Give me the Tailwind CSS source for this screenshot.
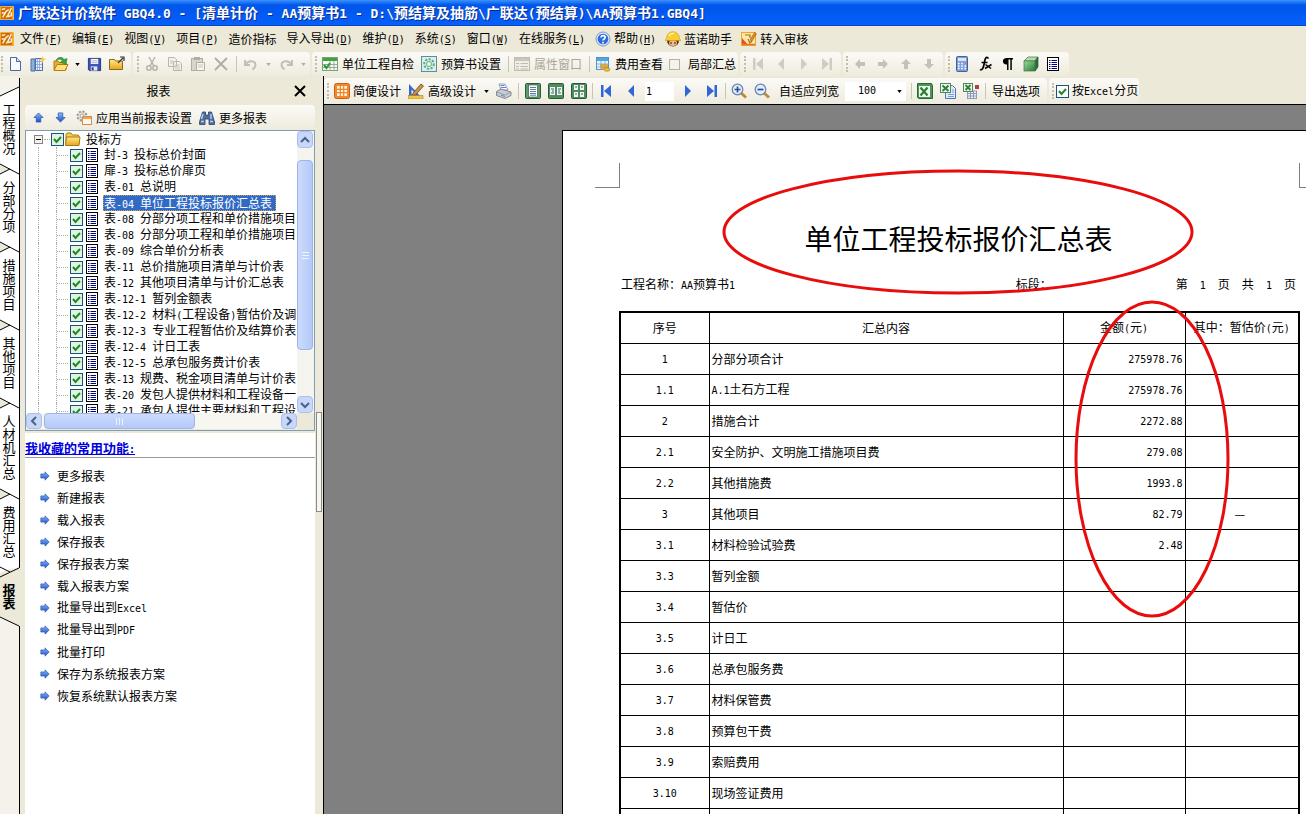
<!DOCTYPE html>
<html lang="zh-CN">
<head>
<meta charset="utf-8">
<title>广联达计价软件 GBQ4.0</title>
<script src="https://cdn.jsdelivr.net/npm/@tailwindcss/browser@4"></script>
</head>
<body class="h-screen flex flex-col overflow-hidden bg-[#ece9d8] text-black text-[12px] leading-[16px] font-['Noto_Sans_CJK_SC',sans-serif] whitespace-nowrap">

<svg class="absolute size-0" aria-hidden="true">
  <defs>
    <linearGradient id="blue" x1="0" y1="0" x2="0" y2="1"><stop offset="0" stop-color="#8db8f8"/><stop offset="1" stop-color="#1c4fc4"/></linearGradient>
    <linearGradient id="green" x1="0" y1="0" x2="1" y2="1"><stop offset="0" stop-color="#9fdc9f"/><stop offset="1" stop-color="#267a35"/></linearGradient>
    <linearGradient id="gold" x1="0" y1="0" x2="0" y2="1"><stop offset="0" stop-color="#ffe98a"/><stop offset="1" stop-color="#e8a41c"/></linearGradient>
  </defs>
  <symbol id="app" viewBox="0 0 16 16"><rect width="16" height="16" rx="1" fill="#f7b530"/><rect x="1" y="1" width="13" height="14" fill="#cf6a10"/><path d="M2 4l4-1M2 8h4L3 13M7 13c2-1 4-6 6-11M6 7l4-3M9 12l4-1V7" stroke="#fff3c8" stroke-width="1.700" fill="none"/></symbol>
  <symbol id="help" viewBox="0 0 16 16"><circle cx="8" cy="8" r="7" fill="#d7e5fa" stroke="#7e9bd0"/><circle cx="8" cy="8" r="5.3" fill="#2c6cd8"/><path d="M6 6.500c0-2.600 4.200-2.400 4.200 0C10.200 8 8 8 8 9.600M8 10.800v1.600" stroke="#fff" stroke-width="1.600" fill="none"/></symbol>
  <symbol id="boy" viewBox="0 0 16 16"><circle cx="8" cy="9.500" r="6" fill="#5a2d18"/><ellipse cx="8" cy="12" rx="4" ry="3" fill="#f0b890"/><path d="M1.500 7.500C1.500-1.500 14.500-1.500 14.500 7.500L16 9.500H0z" fill="#f7ce30" stroke="#d29a10" stroke-width=".6"/><path d="M4 5c1-2 3-3 5-2.500" stroke="#fff7b0" stroke-width="1.300" fill="none"/><path d="M6 11v2M10 11v2" stroke="#321"/></symbol>
  <symbol id="audit" viewBox="0 0 16 16"><rect x=".5" y="1.500" width="14" height="13" fill="#ffe7a8" stroke="#f0a428"/><path d="M1 14V7l6 7z" fill="#e44d26"/><path d="M1 13.500h13" stroke="#e8742a" stroke-width="1.500"/><path d="M4 4h5v3M7 8l2 4 2-2" stroke="#b06a18" stroke-width="1.200" fill="none"/><path d="M9 9l4.500-7.500 2 1.500L11 10z" fill="#d98a24" stroke="#8a5010" stroke-width=".5"/></symbol>
  <symbol id="new" viewBox="0 0 16 16"><path d="M3.500 1.500h6l4 4v9h-10z" fill="#f8fbff" stroke="#4a6a9a"/><path d="M9.500 1.500v4h4" fill="#cfe0f5" stroke="#4a6a9a"/></symbol>
  <symbol id="newbook" viewBox="0 0 16 16"><path d="M1 3h4v12H1z" fill="#8fb0d8" stroke="#4a6ea6"/><path d="M5.500 2.500h7v12h-7z" fill="#e8f1fc" stroke="#4a6ea6"/><path d="M7.500 3v11M9.500 3v11M6 5.500h6M6 8.500h6M6 11.500h6" stroke="#7fa3d4" stroke-width=".8"/><path d="M12.500 0l1 2.500 2.500 1-2.500 1-1 2.500-1-2.500-2.500-1 2.500-1z" fill="#ffc83c"/></symbol>
  <symbol id="open" viewBox="0 0 16 16"><path d="M1 14V5h4l1 1.500h7V14z" fill="#e9ad2c" stroke="#b87b0c"/><path d="M1 14.500l3-6h11l-3 6z" fill="#ffe07a" stroke="#b87b0c"/><path d="M3 5c1-4 6-5 8-1.500l3-1-1 6-5.500-2.500 2-1C8 2.500 5 3 3 5z" fill="#37a53c" stroke="#1c7a24" stroke-width=".5"/></symbol>
  <symbol id="save" viewBox="0 0 16 16"><path d="M1.500 1.500h13v13h-12l-1-1z" fill="#3a52b4" stroke="#24357e"/><rect x="4" y="2" width="8" height="5.500" fill="#f4f6fc"/><path d="M5 4h6M5 6h6" stroke="#9aa6cc" stroke-width=".8"/><rect x="4" y="10" width="7" height="4.500" fill="#dfe4f4"/><rect x="5" y="11" width="2" height="3" fill="#24357e"/></symbol>
  <symbol id="folder2" viewBox="0 0 16 16"><path d="M.5 13.500v-10h5l1 1.500h7v8.500z" fill="url(#gold)" stroke="#8a6a1a"/><path d="M9 7l5-5M11 1h4v4" stroke="#333" stroke-width="1.200" fill="none"/></symbol>
  <symbol id="cut" viewBox="0 0 16 16"><path d="M5 1l5 9M11 1L6 10" stroke="#b5b3a8" stroke-width="1.500"/><circle cx="5" cy="12" r="2.200" fill="none" stroke="#b5b3a8" stroke-width="1.500"/><circle cx="11" cy="12" r="2.200" fill="none" stroke="#b5b3a8" stroke-width="1.500"/></symbol>
  <symbol id="copy" viewBox="0 0 16 16"><path d="M1.500 1.500h6l2 2v7h-8zM6.500 5.500h6l2 2v7h-8z" fill="#f2f1ea" stroke="#b9b7ab"/><path d="M8 9h5M8 11h5M8 13h5M3 5h3M3 7h3" stroke="#c9c7bc"/></symbol>
  <symbol id="paste" viewBox="0 0 16 16"><rect x="1.500" y="2.500" width="11" height="12" fill="#d8d6ca" stroke="#b0aea2"/><rect x="4" y="1" width="6" height="3" fill="#b0aea2"/><path d="M6.500 6.500h8v8h-8z" fill="#f6f5f0" stroke="#b0aea2"/><path d="M8 9h5M8 11h5" stroke="#c9c7bc"/></symbol>
  <symbol id="del" viewBox="0 0 16 16"><path d="M2 2l12 12M14 2L2 14" stroke="#aeaca2" stroke-width="1.800"/></symbol>
  <symbol id="undo" viewBox="0 0 16 16"><path d="M2 4v5h5M2.500 8.500c3-5 10-4 10 .5 0 2-1 3-3 4.500" fill="none" stroke="#c2c0b6" stroke-width="2"/></symbol>
  <symbol id="redo" viewBox="0 0 16 16"><path d="M14 4v5H9M13.500 8.500c-3-5-10-4-10 .5 0 2 1 3 3 4.500" fill="none" stroke="#c2c0b6" stroke-width="2"/></symbol>
  <symbol id="check1" viewBox="0 0 16 16"><rect x=".5" y="1.500" width="15" height="13" fill="#f6fbf4" stroke="#7aa07a"/><path d="M1 2h14v3H1z" fill="#3ea144"/><path d="M1 8.500h14M1 11.500h14M8 5v10M12 5v10" stroke="#9aa89a"/><path d="M2 9l2.500 3L8 7" stroke="#2f9a34" stroke-width="2" fill="none"/></symbol>
  <symbol id="gear" viewBox="0 0 16 16"><rect x=".5" y=".5" width="15" height="15" fill="#dbeff0" stroke="#5b8fa0"/><circle cx="8" cy="8" r="4.800" fill="none" stroke="#5fae78" stroke-width="2" stroke-dasharray="2.200 1.400"/><circle cx="8" cy="8" r="2.500" fill="#eefaf0" stroke="#5fae78"/></symbol>
  <symbol id="prop" viewBox="0 0 16 16"><rect x=".5" y="1.500" width="15" height="13" fill="#eeede6" stroke="#bebcb0"/><path d="M1 2h14v3H1z" fill="#c9c7bb"/><path d="M2 7.500h3M2 10.500h3M2 13h3M6.500 7.500H14M6.500 10.500H14M6.500 13H14" stroke="#bebcb0"/></symbol>
  <symbol id="fee" viewBox="0 0 16 16"><rect x="1.500" y="1.500" width="12" height="12" fill="#eaf3fd" stroke="#4f94cc"/><path d="M2 2h11v3H2z" fill="#58a5de"/><path d="M2 8h11M2 11h11M6 5v8M10 5v8" stroke="#7fb5e2"/><path d="M5 9h8M5 11h8M6 13h7" stroke="#d69a22" stroke-width="1.600"/><ellipse cx="12" cy="13.500" rx="3" ry="1.800" fill="#efbe3c" stroke="#b57f12" stroke-width=".6"/></symbol>
  <symbol id="first" viewBox="0 0 16 16"><path d="M3 2h2.500v12H3zM13 2v12L6 8z" fill="currentColor"/></symbol>
  <symbol id="prev" viewBox="0 0 16 16"><path d="M11 2v12L5 8z" fill="currentColor"/></symbol>
  <symbol id="next" viewBox="0 0 16 16"><path d="M5 2v12l6-6z" fill="currentColor"/></symbol>
  <symbol id="last" viewBox="0 0 16 16"><path d="M13 2h-2.500v12H13zM3 2v12l7-6z" fill="currentColor"/></symbol>
  <symbol id="right" viewBox="0 0 16 16"><path d="M3 6h5V3l5 5-5 5v-3H3z" fill="currentColor"/></symbol>
  <symbol id="left" viewBox="0 0 16 16"><path d="M13 6H8V3L3 8l5 5v-3h5z" fill="currentColor"/></symbol>
  <symbol id="up" viewBox="0 0 16 16"><path d="M6 13V8H3l5-5 5 5h-3v5z" fill="currentColor"/></symbol>
  <symbol id="down" viewBox="0 0 16 16"><path d="M6 3v5H3l5 5 5-5h-3V3z" fill="currentColor"/></symbol>
  <symbol id="calc" viewBox="0 0 16 16"><rect x="2.500" y=".5" width="11" height="15" rx="1" fill="#7d9fd8" stroke="#43619c"/><rect x="4" y="2" width="8" height="3" fill="#d8e8fb"/><path d="M4 7.500h8M4 10h8M4 12.500h8" stroke="#fff" stroke-width="1.500" stroke-dasharray="1.600 1.600"/><path d="M10.500 7.500h1.500" stroke="#e05050" stroke-width="1.500"/></symbol>
  <symbol id="fx" viewBox="0 0 16 16"><path d="M11.500 2.500C9-.5 8 3 7.500 6S6 15 3 13.500M4.500 6.500h6" stroke="#000" stroke-width="1.700" fill="none"/><path d="M8.500 8.500l5.500 4M14.500 8.500L8 12.500" stroke="#000" stroke-width="1.500"/></symbol>
  <symbol id="para" viewBox="0 0 16 16"><path d="M13 2H7C1 2 2 9 7 8.500V14h1.500V3.500h1.800V14h1.500V3.500H13z" fill="#000"/></symbol>
  <symbol id="cube" viewBox="0 0 16 16"><path d="M1 5l4-4h10l-3 4z" fill="#b3dcae" stroke="#3c7a44" stroke-width=".7"/><path d="M12 5l3-4v10l-3 4z" fill="#2c7040" stroke="#235832" stroke-width=".7"/><rect x="1" y="5" width="11" height="10" fill="url(#green)" stroke="#3c7a44" stroke-width=".7"/></symbol>
  <symbol id="list" viewBox="0 0 12 14"><rect x=".5" y=".5" width="11" height="13" fill="#fff" stroke="#000"/><path d="M2 3.500h1.500M2 5.500h1.500M2 7.500h1.500M2 9.500h1.500M2 11.500h1.500M4.500 3.500H10M4.500 5.500H10M4.500 7.500H10M4.500 9.500H10M4.500 11.500H10" stroke="#000080"/></symbol>
  <symbol id="grid" viewBox="0 0 16 16"><rect x=".5" y=".5" width="15" height="15" rx="2" fill="#f28a2c" stroke="#cf5f12"/><path d="M3 3h10v10H3z" fill="#fff2dc"/><path d="M3 6.300h10M3 9.700h10M6.300 3v10M9.700 3v10" stroke="#ef8428" stroke-width="1.200"/></symbol>
  <symbol id="pen" viewBox="0 0 16 16"><path d="M1 1v13h12z" fill="#3b66c4"/><path d="M3.500 6.500v5h5z" fill="#e6eefb"/><path d="M5 10l8-9 2.500 2-8 9-3 .5z" fill="#c89146" stroke="#5d3b12" stroke-width=".7"/><path d="M0 12.500h15V16H0z" fill="#f0c544" stroke="#a8801a" stroke-width=".6"/></symbol>
  <symbol id="print" viewBox="0 0 16 16"><path d="M5 7L3 1l6 0 3 6z" fill="#fff" stroke="#7088b4" stroke-width=".8"/><path d="M4.500 2.500h4M5 4.500h5" stroke="#5b85cc"/><path d="M.5 8.500L5 6l10 3v3.500l-6 3-8.500-3z" fill="#c8ccd4" stroke="#6b7180" stroke-width=".8"/><path d="M.5 9l8.500 3 6-3" stroke="#8b91a0" stroke-width=".8" fill="none"/><path d="M5 12.500l4 1.500v-1l-4-1.500z" fill="#5b85cc"/></symbol>
  <symbol id="pg1" viewBox="0 0 16 16"><rect x=".5" y=".5" width="15" height="15" rx="1" fill="#5f9a6a" stroke="#2a5a36"/><rect x="3.500" y="2" width="9" height="12" fill="#fff" stroke="#294a30" stroke-width=".6"/><path d="M5 4.500h6M5 6.500h6M5 8.500h6M5 10.500h6M5 12.200h6" stroke="#5b7d9c"/></symbol>
  <symbol id="pg2" viewBox="0 0 16 16"><rect x=".5" y=".5" width="15" height="15" rx="1" fill="#4f8c5b" stroke="#2a5a36"/><path d="M2 4h5v8H2zM9 4h5v8H9z" fill="#eef6ee"/><path d="M3 6h3M4 8h2M3 10h3M10 6h3M10 8h2M10 10h3" stroke="#37608a"/></symbol>
  <symbol id="pg4" viewBox="0 0 16 16"><rect x=".5" y=".5" width="15" height="15" rx="1" fill="#4f8c5b" stroke="#2a5a36"/><path d="M3 2h4v5H3zM9 2h4v5H9zM3 9h4v5H3zM9 9h4v5H9z" fill="#eef6ee"/><path d="M4 4h2M10 4h2M4 11h2M10 11h2" stroke="#37608a"/></symbol>
  <symbol id="zin" viewBox="0 0 16 16"><path d="M10 10l5 4.500" stroke="#c48a2c" stroke-width="3"/><circle cx="6.500" cy="6.500" r="5.300" fill="#e4effb" stroke="#6a86b4" stroke-width="1.300"/><path d="M3.500 6.500h6M6.500 3.500v6" stroke="#2e4f96" stroke-width="1.700"/></symbol>
  <symbol id="zout" viewBox="0 0 16 16"><path d="M10 10l5 4.500" stroke="#c48a2c" stroke-width="3"/><circle cx="6.500" cy="6.500" r="5.300" fill="#e4effb" stroke="#6a86b4" stroke-width="1.300"/><path d="M3.500 6.500h6" stroke="#2e4f96" stroke-width="1.700"/></symbol>
  <symbol id="xls" viewBox="0 0 16 16"><path d="M.5 .5h14l1 2v13H2l-1.500-1z" fill="#4d9455" stroke="#2a6a34"/><rect x="2" y="3" width="11" height="11" fill="#f3faf2"/><path d="M3.500 4.500l7 8M10.500 4.500l-7 8" stroke="#2d7f38" stroke-width="2.300"/></symbol>
  <symbol id="xls2" viewBox="0 0 16 16"><path d="M5.500 2.500h7l3 3v10h-10z" fill="#dfeafa" stroke="#4f74b4"/><path d="M8 13.500h6M12 7h2M12 9h2M8 11.500h6" stroke="#7c9dd2"/><rect x=".5" y=".5" width="10" height="9" fill="#eef8ee" stroke="#4d8a54"/><path d="M2.500 2.500l6 5.500M8.500 2.500l-6 5.500" stroke="#2d7f38" stroke-width="2"/></symbol>
  <symbol id="xls3" viewBox="0 0 16 16"><path d="M4 10.500h10M4 13h10M4.500 8v7.500M7.500 8v7.500M10.500 8v7.500M13.500 8v7.500M4 15.500h10M4 8h10" stroke="#8a9cc4"/><rect x=".5" y=".5" width="9" height="8" fill="#eef8ee" stroke="#4d8a54"/><path d="M2.500 2l5 5M7.500 2l-5 5" stroke="#2d7f38" stroke-width="1.800"/><rect x="12" y="2" width="4" height="4" fill="#b83a4c"/></symbol>
  <symbol id="apply" viewBox="0 0 16 16"><circle cx="6" cy="6" r="4.500" fill="#e3e1da" stroke="#9a988e" stroke-width="2" stroke-dasharray="2 1.500"/><circle cx="6" cy="6" r="1.800" fill="#fff" stroke="#9a988e" stroke-width=".8"/><rect x="6.500" y="6.500" width="9" height="8" fill="#fff8ee" stroke="#d98b4a"/><path d="M7 7h8v2H7z" fill="#f2a45c"/></symbol>
  <symbol id="bino" viewBox="0 0 16 16"><path d="M3.500 2h3v3h3V2h3l3 10v2.500H10V9H6v5.500H.5V12z" fill="#4e6f9e" stroke="#2b4470" stroke-width=".8"/><path d="M2 11.500h3M11 11.500h3M4 4l-1.500 5M12 4v5" stroke="#b9d0ee" stroke-width="1.400"/></symbol>
  <symbol id="folder" viewBox="0 0 16 14"><path d="M1 12V2.500l1-1.500h4l1.500 2H13l1 1V12z" fill="#f4cf52" stroke="#a87c10"/><path d="M.5 13.500l1-8.500h13.500l-1 8.500z" fill="url(#gold)" stroke="#a87c10"/></symbol>
  <symbol id="arrow" viewBox="0 0 12 12"><path d="M1 3.500h5V1l5 5-5 5V8.500H1z" fill="url(#blue)" stroke="#2a55b0" stroke-width=".8"/></symbol>
  <symbol id="arrowup" viewBox="0 0 12 12"><path d="M3.500 11V6H1l5-5 5 5H8.500v5z" fill="url(#blue)" stroke="#2a55b0" stroke-width=".8"/></symbol>
  <symbol id="arrowdn" viewBox="0 0 12 12"><path d="M3.500 1v5H1l5 5 5-5H8.500V1z" fill="url(#blue)" stroke="#2a55b0" stroke-width=".8"/></symbol>
  <symbol id="drop" viewBox="0 0 6 4"><path d="M0 0h6L3 4z" fill="currentColor"/></symbol>
  <symbol id="chev" viewBox="0 0 10 10"><path d="M1 7l4-4 4 4" stroke="#4d6185" stroke-width="2" fill="none"/></symbol>
</svg>

<header class="flex h-[26px] shrink-0 items-center gap-1 bg-linear-to-b from-[#3a93ff] via-[#0055ea] via-20% to-[#0560fb] border-b border-[#0a45c4] text-white font-bold text-[14px]">
  <svg class="size-[14px]"><use href="#app"/></svg>
  <h1 class="[text-shadow:1px_1px_#0a2a8c]">广联达计价软件 GBQ4.0 - [清单计价 - AA预算书1 - D:\预结算及抽筋\广联达(预结算)\AA预算书1.GBQ4]</h1>
</header>

<nav class="flex h-[26px] shrink-0 items-center gap-[10px]" aria-label="菜单">
  <div class="flex items-center gap-[6px]"><svg class="size-[14px]"><use href="#app"/></svg><button><span>文件(<u>F</u>)</span></button></div>
  <button><span>编辑(<u>E</u>)</span></button>
  <button><span>视图(<u>V</u>)</span></button>
  <button><span>项目(<u>P</u>)</span></button>
  <button>造价指标</button>
  <button><span>导入导出(<u>D</u>)</span></button>
  <button><span>维护(<u>D</u>)</span></button>
  <button><span>系统(<u>S</u>)</span></button>
  <button><span>窗口(<u>W</u>)</span></button>
  <button><span>在线服务(<u>L</u>)</span></button>
  <div class="flex gap-[9px]">
    <button class="flex items-center gap-[3px]"><svg class="size-4"><use href="#help"/></svg><span>帮助(<u>H</u>)</span></button>
    <button class="flex items-center gap-[3px]"><svg class="size-4"><use href="#boy"/></svg>蓝诺助手</button>
    <button class="flex items-center gap-[3px]"><svg class="size-4"><use href="#audit"/></svg>转入审核</button>
  </div>
</nav>

<div class="flex h-6 shrink-0 gap-[2px]" role="toolbar">
  <div class="flex w-[131px] items-center gap-[7px] rounded-r bg-linear-to-b from-[#fbfaf6] to-[#eeebde]">
    <i class="ml-px -mr-[3px] h-4 w-0 border-l-2 border-dotted border-[#c1beae]"></i>
    <button aria-label="新建"><svg class="size-4"><use href="#new"/></svg></button>
    <button aria-label="新建项目"><svg class="size-4"><use href="#newbook"/></svg></button>
    <button aria-label="打开" class="flex items-center gap-[6px]"><svg class="size-4"><use href="#open"/></svg><svg class="h-[3px] w-[5px]"><use href="#drop"/></svg></button>
    <button aria-label="保存"><svg class="size-[15px]"><use href="#save"/></svg></button>
    <button aria-label="关闭"><svg class="size-4"><use href="#folder2"/></svg></button>
  </div>
  <div class="flex w-[177px] items-center gap-[7px] rounded bg-linear-to-b from-[#fbfaf6] to-[#eeebde] text-[#b0aea2]">
    <i class="ml-1 mr-[-2px] h-4 w-0 border-l-2 border-dotted border-[#c1beae]"></i>
    <button aria-label="剪切"><svg class="size-4"><use href="#cut"/></svg></button>
    <button aria-label="复制"><svg class="size-4"><use href="#copy"/></svg></button>
    <button aria-label="粘贴"><svg class="size-4"><use href="#paste"/></svg></button>
    <button aria-label="删除"><svg class="size-4"><use href="#del"/></svg></button>
    <i class="h-4 w-px bg-[#c9c6b6]"></i>
    <button aria-label="撤销" class="-ml-px flex items-center gap-[7px]"><svg class="size-4"><use href="#undo"/></svg><svg class="h-[3px] w-[5px]"><use href="#drop"/></svg></button>
    <button aria-label="重做" class="flex items-center gap-[7px]"><svg class="size-4"><use href="#redo"/></svg><svg class="h-[3px] w-[5px]"><use href="#drop"/></svg></button>
  </div>
  <div class="flex w-[426px] items-center gap-[7px] rounded bg-linear-to-b from-[#fbfaf6] to-[#eeebde]">
    <i class="ml-[3px] -mr-[2px] h-4 w-0 border-l-2 border-dotted border-[#c1beae]"></i>
    <button class="flex items-center gap-[4px]"><svg class="size-4"><use href="#check1"/></svg>单位工程自检</button>
    <button class="flex items-center gap-[4px]"><svg class="size-4"><use href="#gear"/></svg>预算书设置</button>
    <i class="h-4 w-px bg-[#c9c6b6]"></i>
    <button disabled class="-ml-[2px] flex items-center gap-[4px] text-[#aca899]"><svg class="size-4"><use href="#prop"/></svg>属性窗口</button>
    <i class="h-4 w-px bg-[#c9c6b6]"></i>
    <button class="-ml-[2px] flex items-center gap-[4px]"><svg class="size-4"><use href="#fee"/></svg>费用查看</button>
    <label class="-ml-px flex items-center gap-[8px]"><input type="checkbox" class="size-[11px] appearance-none border border-[#b5b2a5] bg-[#f4f2ea]">局部汇总</label>
  </div>
  <div class="flex w-[101px] items-center gap-[7px] rounded bg-linear-to-b from-[#fbfaf6] to-[#eeebde] text-[#cfcdc2]">
    <i class="ml-1 -mr-[3px] h-4 w-0 border-l-2 border-dotted border-[#c1beae]"></i>
    <button aria-label="首条"><svg class="size-4"><use href="#first"/></svg></button>
    <button aria-label="上一条"><svg class="size-4"><use href="#prev"/></svg></button>
    <button aria-label="下一条"><svg class="size-4"><use href="#next"/></svg></button>
    <button aria-label="末条"><svg class="size-4"><use href="#last"/></svg></button>
  </div>
  <div class="flex w-[100px] items-center gap-[7px] rounded bg-linear-to-b from-[#fbfaf6] to-[#eeebde] text-[#c4c2b8]">
    <i class="ml-[3px] -mr-[3px] h-4 w-0 border-l-2 border-dotted border-[#c1beae]"></i>
    <button aria-label="左移"><svg class="size-4"><use href="#left"/></svg></button>
    <button aria-label="右移"><svg class="size-4"><use href="#right"/></svg></button>
    <button aria-label="上移"><svg class="size-4"><use href="#up"/></svg></button>
    <button aria-label="下移"><svg class="size-4"><use href="#down"/></svg></button>
  </div>
  <div class="flex w-[124px] items-center gap-[7px] rounded bg-linear-to-b from-[#fbfaf6] to-[#eeebde]">
    <i class="ml-[3px] -mr-[3px] h-4 w-0 border-l-2 border-dotted border-[#c1beae]"></i>
    <button aria-label="计算器"><svg class="size-4"><use href="#calc"/></svg></button>
    <button aria-label="函数"><svg class="size-4"><use href="#fx"/></svg></button>
    <button aria-label="段落"><svg class="size-4"><use href="#para"/></svg></button>
    <button aria-label="模型"><svg class="size-4"><use href="#cube"/></svg></button>
    <button aria-label="列表" class="ml-px"><svg class="h-[14px] w-3"><use href="#list"/></svg></button>
  </div>
</div>

<div class="flex min-h-0 flex-1">
  <nav class="relative flex w-5 shrink-0 flex-col pt-4 leading-[13px] text-[13px]" aria-label="页签">
    <svg class="absolute inset-0 h-full w-5" aria-hidden="true">
      <rect width="19" height="100%" fill="#f4f2ea"/>
      <path d="M0 20L19 11V493L0 497z" fill="#fff"/>
      <path d="M0 497L10 493 19 492V550L0 541z" fill="#ece9d8"/>
      <path d="M0 88L10 93 0 98zM0 166L10 171 0 176zM0 244L10 249 0 254zM0 322L10 327 0 332zM0 413L10 418 0 423z" fill="#ece9d8"/>
      <path d="M0 20L19 11M0 88l19 10M0 98l10-5M0 166l19 10M0 176l10-5M0 244l19 10M0 254l10-5M0 322l19 10M0 332l10-5M0 413l19 10M0 423l10-5M0 491l10 5M0 501l19-9M0 541l19 9" fill="none" stroke="#000"/>
      <path d="M19.500 2V492M19.500 550V2000" stroke="#000"/>
    </svg>
    <button class="relative flex h-[78px] w-[18px] justify-center pt-[10px] whitespace-normal"><span class="w-[13px]">工程概况</span></button>
    <button class="relative flex h-[78px] w-[18px] justify-center pt-[10px] whitespace-normal"><span class="w-[13px]">分部分项</span></button>
    <button class="relative flex h-[78px] w-[18px] justify-center pt-[10px] whitespace-normal"><span class="w-[13px]">措施项目</span></button>
    <button class="relative flex h-[78px] w-[18px] justify-center pt-[10px] whitespace-normal"><span class="w-[13px]">其他项目</span></button>
    <button class="relative flex h-[91px] w-[18px] justify-center pt-[10px] whitespace-normal"><span class="w-[13px]">人材机汇总</span></button>
    <button class="relative flex h-[78px] w-[18px] justify-center pt-[10px] whitespace-normal"><span class="w-[13px]">费用汇总</span></button>
    <button class="relative flex h-[53px] w-[18px] justify-center pt-[10px] font-bold whitespace-normal"><span class="w-[13px]">报表</span></button>
  </nav>

  <aside class="flex w-[304px] shrink-0 pl-[5px]">
    <div class="flex w-[290px] flex-col">
      <div class="flex h-[29px] shrink-0 items-center pr-[9px]">
        <h2 class="flex-1 pr-[2px] text-center">报表</h2>
        <button aria-label="关闭面板"><svg class="size-[12px]" viewBox="0 0 12 12"><path d="M1 1l10 10M11 1L1 11" stroke="#000" stroke-width="2"/></svg></button>
      </div>
      <div class="flex h-[25px] shrink-0 items-center rounded bg-linear-to-b from-[#fbfaf6] to-[#eeebde] pl-2" role="toolbar">
        <button aria-label="上移报表" class="mr-[11px]"><svg class="size-[11px]"><use href="#arrowup"/></svg></button>
        <button aria-label="下移报表" class="mr-[10px]"><svg class="size-[11px]"><use href="#arrowdn"/></svg></button>
        <button class="mr-[7px] flex items-center gap-1"><svg class="size-4"><use href="#apply"/></svg>应用当前报表设置</button>
        <button class="flex items-center gap-1"><svg class="size-4"><use href="#bino"/></svg>更多报表</button>
      </div>
      <div class="flex h-[301px] shrink-0 flex-col border border-[#7f9db9] bg-white">
        <div class="flex min-h-0 flex-1">
          <ul id="tree" class="relative min-w-0 flex-1 overflow-hidden">
            <li class="flex h-4 items-center">
              <span class="ml-2 flex size-[9px] items-center justify-center border border-[#848484] bg-[#f4f2ea]"><i class="h-px w-[5px] bg-black"></i></span>
              <i class="ml-px mr-px h-0 w-[6px] border-t border-dotted border-[#aaa]"></i>
              <label class="flex items-center"><input type="checkbox" checked class="size-[13px] appearance-none border border-[#1c5180] bg-[#e2f3e0] bg-[url('data:image/svg+xml,%3Csvg%20xmlns=%22http://www.w3.org/2000/svg%22%20viewBox=%220%200%2011%2011%22%3E%3Cpath%20d=%22M2%205l2.500%203L9%203%22%20fill=%22none%22%20stroke=%22%231f8a2a%22%20stroke-width=%222%22/%3E%3C/svg%3E')]"><svg class="ml-[1px] mr-[5px] h-[14px] w-4"><use href="#folder"/></svg>投标方</label>
            </li>
          </ul>
          <div class="flex w-[17px] shrink-0 flex-col bg-[#f5f4ee] pr-px">
            <button aria-label="向上滚动" class="flex h-[17px] items-center justify-center rounded-sm border border-[#aebfe6] bg-[#c8d7fc]"><svg class="size-[10px]"><use href="#chev"/></svg></button>
            <div class="mt-3 flex h-[190px] items-center justify-center rounded-sm border border-[#9eb4e4] bg-linear-to-r from-[#cddbfd] to-[#b4c9f9]"><i class="flex h-[7px] w-[7px] items-center border-y border-[#eef4fe]"><i class="h-px w-full bg-[#eef4fe]"></i></i></div>
            <button aria-label="向下滚动" class="mt-auto flex h-[17px] items-center justify-center rounded-sm border border-[#aebfe6] bg-[#c8d7fc]"><svg class="size-[10px] rotate-180"><use href="#chev"/></svg></button>
          </div>
        </div>
        <div class="flex h-[17px] shrink-0 bg-[#ece9d8] pb-px">
          <div class="flex flex-1 bg-[#f7f6f1]">
            <button aria-label="向左滚动" class="flex w-4 items-center justify-center rounded-sm border border-[#aebfe6] bg-[#c8d7fc]"><svg class="size-[10px] -rotate-90"><use href="#chev"/></svg></button>
            <div class="ml-[2px] flex w-[151px] items-center justify-center rounded-sm border border-[#9eb4e4] bg-linear-to-b from-[#cddbfd] to-[#b4c9f9]"><i class="flex h-[7px] w-[7px] justify-center border-x border-[#eef4fe]"><i class="h-full w-px bg-[#eef4fe]"></i></i></div>
            <button aria-label="向右滚动" class="ml-auto flex w-4 items-center justify-center rounded-sm border border-[#aebfe6] bg-[#c8d7fc]"><svg class="size-[10px] rotate-90"><use href="#chev"/></svg></button>
          </div>
          <div class="w-[17px]"></div>
        </div>
      </div>
      <section class="mt-[2px] min-h-0 flex-1 bg-white pt-2">
        <h3 class="border-b border-[#9a9a9a] text-[13px] leading-[14px] font-bold text-[#0000e0] underline">我收藏的常用功能:</h3>
        <ul id="favs" class="pt-[7px] pl-[15px]"></ul>
      </section>
    </div>
    <div class="flex flex-1 justify-start border-r border-black pt-[336px] pl-px">
      <i class="flex h-[100px] w-[6px] border border-[#8d8b80] bg-[#f6f5f0]"></i>
    </div>
  </aside>

  <main class="flex min-w-0 flex-1 flex-col">
    <div class="flex h-[29px] shrink-0 items-stretch border-b border-black pt-[2px]" role="toolbar">
      <div class="flex w-[723px] items-center rounded bg-linear-to-b from-[#fbfaf6] to-[#eeebde]">
        <i class="ml-[3px] mr-[5px] h-4 w-0 border-l-2 border-dotted border-[#c1beae]"></i>
        <button class="mr-[7px] flex items-center gap-[3px]"><svg class="size-4"><use href="#grid"/></svg>简便设计</button>
        <button class="mr-[7px] flex items-center gap-1"><svg class="size-4"><use href="#pen"/></svg>高级设计<svg class="ml-1 h-[3px] w-[5px]"><use href="#drop"/></svg></button>
        <button aria-label="打印"><svg class="size-4"><use href="#print"/></svg></button>
        <i class="mx-[6px] h-4 w-px bg-[#c9c6b6]"></i>
        <div class="flex gap-[7px]">
          <button aria-label="单页"><svg class="size-4"><use href="#pg1"/></svg></button>
          <button aria-label="双页"><svg class="size-4"><use href="#pg2"/></svg></button>
          <button aria-label="四页"><svg class="size-4"><use href="#pg4"/></svg></button>
        </div>
        <i class="mx-[5px] h-4 w-px bg-[#c9c6b6]"></i>
        <div class="flex items-center gap-[6px] text-[#2f66d8]">
          <button aria-label="首页" class="mr-[3px]"><svg class="size-4"><use href="#first"/></svg></button>
          <button aria-label="上一页"><svg class="size-4"><use href="#prev"/></svg></button>
          <input aria-label="页码" value="1" class="h-[19px] w-[29px] bg-white px-px text-[10px] text-black font-['DejaVu_Sans_Mono',monospace]">
          <button aria-label="下一页" class="mr-[2px]"><svg class="size-4"><use href="#next"/></svg></button>
          <button aria-label="末页"><svg class="size-4"><use href="#last"/></svg></button>
        </div>
        <i class="mx-[5px] h-4 w-px bg-[#c9c6b6]"></i>
        <button aria-label="放大" class="mr-[7px]"><svg class="size-4"><use href="#zin"/></svg></button>
        <button aria-label="缩小" class="mr-[9px]"><svg class="size-4"><use href="#zout"/></svg></button>
        <button class="mr-[6px]">自适应列宽</button>
        <div class="relative flex">
          <select aria-label="缩放比例" class="h-[19px] w-[61px] appearance-none bg-white pl-[13px] text-[10px] font-['DejaVu_Sans_Mono',monospace]"><option>100</option></select>
          <svg class="pointer-events-none absolute top-2 right-1 h-[3px] w-[5px]"><use href="#drop"/></svg>
        </div>
        <i class="mx-[5px] h-4 w-px bg-[#c9c6b6]"></i>
        <div class="flex gap-[7px]">
          <button aria-label="导出到Excel"><svg class="size-4"><use href="#xls"/></svg></button>
          <button aria-label="批量导出"><svg class="size-4"><use href="#xls2"/></svg></button>
          <button aria-label="导出单元格"><svg class="size-4"><use href="#xls3"/></svg></button>
        </div>
        <i class="mx-[6px] h-4 w-px bg-[#c9c6b6]"></i>
        <button>导出选项</button>
      </div>
      <div class="ml-[2px] flex w-[90px] items-center rounded bg-linear-to-b from-[#fbfaf6] to-[#eeebde]">
        <i class="ml-[3px] mr-[2px] h-4 w-0 border-l-2 border-dotted border-[#c1beae]"></i>
        <label class="flex items-center gap-[3px]"><input type="checkbox" checked class="size-[13px] appearance-none border border-[#1c5180] bg-white bg-[url('data:image/svg+xml,%3Csvg%20xmlns=%22http://www.w3.org/2000/svg%22%20viewBox=%220%200%2011%2011%22%3E%3Cpath%20d=%22M2%205l2.500%203L9%203%22%20fill=%22none%22%20stroke=%22%231f8a2a%22%20stroke-width=%222%22/%3E%3C/svg%3E')]"><span>按Excel分页</span></label>
      </div>
    </div>

    <div class="min-h-0 flex-1 overflow-hidden bg-[#808080] pt-[25px] pl-[238px]">
      <article class="relative min-h-full border-t border-l border-black bg-white pt-8 pr-[6px] pl-[56px]">
        <div class="flex justify-between">
          <i class="-ml-6 size-[25px] border-r border-b border-[#808080]"></i>
          <i class="-mr-6 size-[25px] border-b border-l border-[#808080]"></i>
        </div>
        <h2 class="mt-[33px] pr-[2px] text-center text-[28px] leading-[34px]">单位工程投标报价汇总表</h2>
        <div class="mt-[21px] flex pr-1 pl-[2px]">
          <span>工程名称：AA预算书1</span>
          <span class="mr-[124px] ml-auto">标段：</span>
          <span>第&nbsp; 1&nbsp; 页&nbsp; 共&nbsp; 1&nbsp; 页</span>
        </div>
        <table class="mt-[17px] w-full table-fixed border-collapse border-2 border-black">
          <colgroup><col class="w-[89px]"><col><col class="w-[122px]"><col class="w-[114px]"></colgroup>
          <thead><tr class="h-[31px]">
            <th class="border border-black font-normal">序号</th><th class="border border-black font-normal">汇总内容</th><th class="border border-black font-normal">金额(元)</th><th class="border border-black font-normal">其中：暂估价(元)</th>
          </tr></thead>
          <tbody id="rows"></tbody>
        </table>
        <svg class="pointer-events-none absolute top-0 left-0 h-[500px] w-[680px]" aria-hidden="true">
          <g fill="none" stroke="#e80c0c" stroke-width="3"><ellipse cx="395" cy="101" rx="234" ry="61"/><ellipse cx="589" cy="328" rx="76" ry="157"/></g>
        </svg>
      </article>
    </div>
  </main>
</div>

<script>
const reports = ['封-3 投标总价封面','扉-3 投标总价扉页','表-01 总说明','表-04 单位工程投标报价汇总表','表-08 分部分项工程和单价措施项目','表-08 分部分项工程和单价措施项目','表-09 综合单价分析表','表-11 总价措施项目清单与计价表','表-12 其他项目清单与计价汇总表','表-12-1 暂列金额表','表-12-2 材料(工程设备)暂估价及调','表-12-3 专业工程暂估价及结算价表','表-12-4 计日工表','表-12-5 总承包服务费计价表','表-13 规费、税金项目清单与计价表','表-20 发包人提供材料和工程设备一','表-21 承包人提供主要材料和工程设'];
const tree = document.getElementById('tree');
reports.forEach((name, i) => {
  tree.insertAdjacentHTML('beforeend', `<li class="flex h-4 items-center pl-[12px]"><i class="h-4 w-[19px] shrink-0 border-x border-dotted border-[#aaa]"></i><i class="mr-[2px] h-0 w-[11px] shrink-0 border-t border-dotted border-[#aaa]"></i><label class="flex items-center"><input type="checkbox" checked class="size-[13px] shrink-0 appearance-none border border-[#1c5180] bg-[#e2f3e0] bg-[url('data:image/svg+xml,%3Csvg%20xmlns=%22http://www.w3.org/2000/svg%22%20viewBox=%220%200%2011%2011%22%3E%3Cpath%20d=%22M2%205l2.500%203L9%203%22%20fill=%22none%22%20stroke=%22%231f8a2a%22%20stroke-width=%222%22/%3E%3C/svg%3E')]"><svg class="ml-[3px] mr-[5px] h-[14px] w-3 shrink-0"><use href="#list"/></svg><span class="${i === 3 ? 'h-4 bg-[#316ac5] pr-1 pl-px text-white outline-1 -outline-offset-1 outline-dotted outline-[#c8a050]' : 'pl-px'}">${name}</span></label></li>`);
});
const favs = document.getElementById('favs');
['更多报表','新建报表','载入报表','保存报表','保存报表方案','载入报表方案','批量导出到Excel','批量导出到PDF','批量打印','保存为系统报表方案','恢复系统默认报表方案'].forEach(name => {
  favs.insertAdjacentHTML('beforeend', `<li class="h-[22px]"><button class="flex h-[22px] items-center gap-[7px]"><svg class="size-[10px]"><use href="#arrow"/></svg><span>${name}</span></button></li>`);
});
const rows = document.getElementById('rows');
[['1','分部分项合计','275978.76',''],['1.1','A.1土石方工程','275978.76',''],['2','措施合计','2272.88',''],['2.1','安全防护、文明施工措施项目费','279.08',''],['2.2','其他措施费','1993.8',''],['3','其他项目','82.79','—'],['3.1','材料检验试验费','2.48',''],['3.3','暂列金额','',''],['3.4','暂估价','',''],['3.5','计日工','',''],['3.6','总承包服务费','',''],['3.7','材料保管费','',''],['3.8','预算包干费','',''],['3.9','索赔费用','',''],['3.10','现场签证费用','',''],['','','','']].forEach(([no, item, sum, est]) => {
  rows.insertAdjacentHTML('beforeend', `<tr class="h-[31px]"><td class="border border-black text-center">${no}</td><td class="border border-black pl-[2px]">${item}</td><td class="border border-black pr-[2px] text-right">${sum}</td><td class="border border-black pr-1 text-center">${est}</td></tr>`);
});

// Latin runs take half the width of a Chinese character, as in a fixed-pitch UI font.
const walker = document.createTreeWalker(document.body, NodeFilter.SHOW_TEXT);
const nodes = [];
while (walker.nextNode()) nodes.push(walker.currentNode);
nodes.forEach(node => {
  const parent = node.parentElement;
  if (!node.data.trim() || parent.closest('script,style,svg,select') || !/[\x20-\x7e\xa0]/.test(node.data)) return;
  const big = parent.closest('header');
  const outer = document.createElement('span');
  node.data.split(/([\x20-\x7e\xa0]+)/).filter(Boolean).forEach(part => {
    if (/^[\x20-\x7e\xa0]+$/.test(part)) {
      const s = document.createElement('span');
      s.className = big ? "whitespace-pre text-[13px] font-['DejaVu_Sans_Mono',monospace]" : "whitespace-pre text-[10px] font-['DejaVu_Sans_Mono',monospace]";
      s.textContent = part;
      outer.append(s);
    } else outer.append(part);
  });
  node.replaceWith(outer);
});
</script>
</body>
</html>
